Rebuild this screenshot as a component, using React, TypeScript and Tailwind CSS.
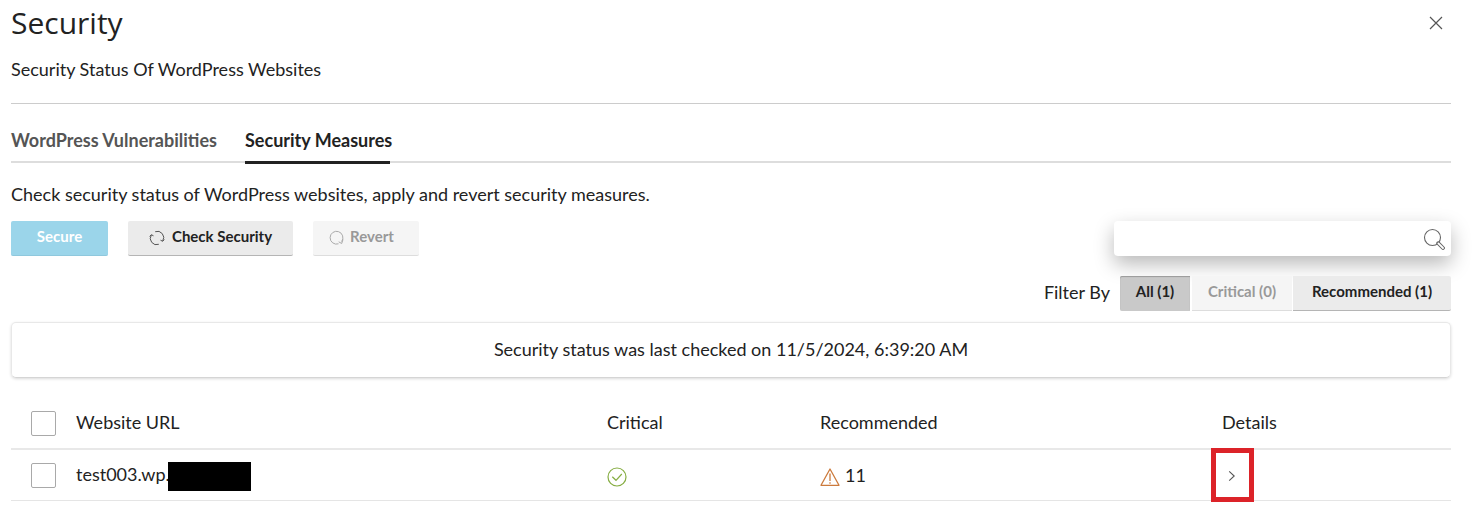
import type { ReactNode } from "react";

const columns = "grid grid-cols-[65px_531px_213px_402px_1fr]";

function Checkbox() {
  return <span className="block w-[25px] h-[25px] border border-[#a9a9a9] rounded-[2px] bg-white"></span>;
}

function CheckSecurityIcon() {
  return (
    <svg className="w-4 h-4" viewBox="0 0 16 16" fill="none" stroke="#555" strokeWidth="1">
      <path d="M6.2 1.7A6.3 6.3 0 0 1 13.7 11M9.8 14.3A6.3 6.3 0 0 1 2.3 5" />
      <path d="M15.3 9.5 13.7 11.3 11.5 10.2M.7 6.5 2.3 4.7 4.5 5.8" />
    </svg>
  );
}

function RevertIcon() {
  return (
    <svg className="w-4 h-4" viewBox="0 0 16 16" fill="none" stroke="#aaa" strokeWidth="1">
      <path d="M10.5 13.8A6.4 6.4 0 1 1 13.6 11.6" />
      <path d="M15 9.5 13.7 13.5 10.7 11.8" />
    </svg>
  );
}

function FilterButton({ className, children }: { className: string; children: ReactNode }) {
  return (
    <button className={`h-[35px] pb-[5px] text-[15px] font-bold border-b ${className}`}>
      {children}
    </button>
  );
}

export default function App() {
  return (
    <div className="h-[522px] overflow-hidden bg-white pl-[11px] pr-[29px] font-['Lato',sans-serif] text-[18px] leading-6 text-[#222]">
      <header className="h-[104px] border-b border-[#ccc] flex justify-between">
        <div>
          <h1 className="font-['Open_Sans',sans-serif] text-[30px] leading-[40px] mt-[3px]">Security</h1>
          <p className="mt-[14px] tracking-[0px]">Security Status Of WordPress Websites</p>
        </div>
        <svg className="w-[14px] h-[14px] mt-4 mr-2" viewBox="0 0 14 14" stroke="#555" strokeWidth="1.2">
          <path d="M1 1 13 13M13 1 1 13" />
        </svg>
      </header>

      <nav className="h-[59px] border-b-2 border-[#ddd] flex items-end gap-[30px] font-bold">
        <div className="w-[204px] h-[33px] text-[#555] whitespace-nowrap">WordPress Vulnerabilities</div>
        <div className="w-[145px] h-[33px] -mb-[3px] box-content border-b-[3px] border-[#222] whitespace-nowrap translate-y-0">Security Measures</div>
      </nav>

      <p className="mt-[19px]">Check security status of WordPress websites, apply and revert security measures.</p>

      <div className="mt-[15px] flex justify-between">
        <div className="flex gap-5 font-bold text-[15px]">
          <button className="w-[97px] h-[35px] pb-[5px] rounded-[2px] bg-[#9bd5ea] border-b border-[#8fc8dd] text-white">Secure</button>
          <button className="w-[165px] h-[35px] rounded-[2px] bg-[#ebebeb] border-b border-[#b5b5b5] flex items-center justify-center gap-[7px]">
            <CheckSecurityIcon />
            <span className="pb-[4px]">Check Security</span>
          </button>
          <button className="w-[106px] h-[35px] rounded-[2px] bg-[#f5f5f5] border-b border-[#ddd] text-[#999] flex items-center pl-[15px] gap-[6px]">
            <RevertIcon />
            <span className="pb-[4px]">Revert</span>
          </button>
        </div>
        <div className="w-[337px] h-[35px] rounded-[4px] bg-white shadow-[0_8px_20px_rgba(0,0,0,0.28)] flex items-center justify-end pr-[6px]">
          <svg className="w-[22px] h-[22px]" viewBox="0 0 22 22" fill="none" stroke="#666" strokeWidth="1.1">
            <circle cx="9.5" cy="9.5" r="8" />
            <path d="M15.2 15.2 20 20" strokeWidth="3.8" strokeLinecap="round" />
            <path d="M15.4 15.4 20 20" stroke="#fff" strokeWidth="1.8" strokeLinecap="round" />
          </svg>
        </div>
      </div>

      <div className="mt-5 flex justify-end">
        <span className="mr-[10px] pt-1">Filter By</span>
        <FilterButton className="w-[70px] mr-[2px] rounded-l-[2px] bg-[#c9c9c9] border-[#c9c9c9] shadow-[inset_0_1px_1px_#999]">All (1)</FilterButton>
        <FilterButton className="w-[100px] mr-px bg-[#f5f5f5] border-[#ddd] text-[#999]">Critical (0)</FilterButton>
        <FilterButton className="w-[158px] rounded-r-[2px] bg-[#ebebeb] border-[#b5b5b5]">Recommended (1)</FilterButton>
      </div>

      <div className="mt-[11px] h-[56px] rounded-[5px] border border-[#e8e8e8] border-b-[#d5d5d5] shadow-[0_1px_3px_rgba(0,0,0,0.15)] text-center pt-[14px]">
        Security status was last checked on 11/5/2024, 6:39:20 AM
      </div>

      <div className={`${columns} mt-[19px] h-[53px] border-b-2 border-[#e8e8e8]`}>
        <div className="pl-5 pt-[14px]"><Checkbox /></div>
        <div className="pt-[13px]">Website URL</div>
        <div className="pt-[13px]">Critical</div>
        <div className="pt-[13px]">Recommended</div>
        <div className="pt-[13px]">Details</div>
      </div>
      <div className={`${columns} h-[51px] border-b border-[#e5e5e5]`}>
        <div className="pl-5 pt-[13px]"><Checkbox /></div>
        <div className="pt-3 flex">
          <span className="w-[92px] h-6 leading-6">test003.wp.</span>
          <span className="w-[83px] h-[29px] bg-black"></span>
        </div>
        <div className="pt-[17px]">
          <svg className="w-5 h-5" viewBox="0 0 20 20" fill="none" stroke="#86ad43" strokeWidth="1.2">
            <circle cx="10" cy="10" r="9" />
            <path d="M5.3 9.7 9 13.3 14.8 7" />
          </svg>
        </div>
        <div className="pt-[13px] flex">
          <svg className="w-5 h-5 mt-1 mr-[5px]" viewBox="0 0 20 20" fill="none" stroke="#cc7a3c" strokeWidth="1.3" strokeLinejoin="round">
            <path d="M10 2 19 18.3H1ZM10 6.5V14M10 15.2V16.8" />
          </svg>
          <span>11</span>
        </div>
        <div>
          <div className="w-[43px] h-[54px] -mt-[2px] -ml-[11px] border-[5px] border-[#dc2329] flex items-center relative">
            <svg className="w-[8px] h-[12px] ml-[12px] mt-[2px]" viewBox="0 0 8 12" fill="none" stroke="#555" strokeWidth="1.1">
              <path d="M1.2 1.3 6.2 6 1.2 10.7" />
            </svg>
          </div>
        </div>
      </div>
    </div>
  );
}
